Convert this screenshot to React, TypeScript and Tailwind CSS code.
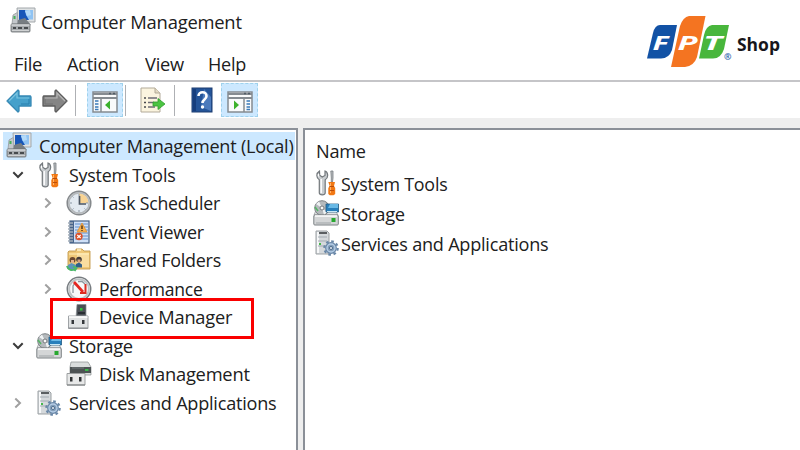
import React from "react";

type IconProps = { className?: string };

function ComputerIcon({ className = "" }: IconProps) {
  return (
    <svg viewBox="0 0 26 26" className={`h-[26px] w-[26px] shrink-0 ${className}`}>
      <path d="M3 8 L8 5 L8 17 L2 17 Z" fill="#c3c7cb" stroke="#8b9094" strokeWidth=".7" />
      <rect x="3.500" y="9" width="2" height="3" fill="#46b05c" />
      <path d="M7 1 H25 V15 L8 15 Z" fill="#dfe2e4" stroke="#a2a7aa" />
      <path d="M9 3 H23 V12.500 H9 Z" fill="#8fc3f3" />
      <path d="M9 3 H15 L16 8 L19 13 H9 Z" fill="#1756b8" />
      <path d="M15 4 L20 3 L21 8 L17 9Z" fill="#b4daf8" />
      <path d="M8 13 L15 11 L21 18 L17 19 H7 Z" fill="#777d82" />
      <rect x="1" y="17" width="19" height="8" rx="1" fill="#a7abae" stroke="#696e71" strokeWidth=".8" />
      <path d="M1.500 18 H19.500" stroke="#eceeef" />
      <path d="M3 21 H6 M8 21 H12 M14 21 H18" stroke="#474b4e" strokeWidth="2" />
      <path d="M2 23.500 H19" stroke="#d0d2d3" />
    </svg>
  );
}

function ToolsIcon({ className = "" }: IconProps) {
  return (
    <svg viewBox="0 0 20 26" className={`h-[26px] w-[20px] shrink-0 ${className}`}>
      <path
        d="M3.500 1 C0 3 0 8 3.300 9.800 V23 C3.500 25.500 9 25.500 9.200 23 V9.800 C13 7.500 12 2 9 1 V5.500 L6.200 7 L3.700 5.200 Z"
        fill="#c9cdd0"
        stroke="#73787c"
        strokeWidth="1.200"
      />
      <path d="M5.200 9 V23 M2.500 4 V6.500" stroke="#fff" strokeWidth="1.400" />
      <path d="M14.800 1 H17 V8 L16.500 12 H15.300 V8Z" fill="#b8bcbf" stroke="#777c80" strokeWidth=".8" />
      <path d="M12.300 12 H19 L18 16 L19.200 18 V24 L17.500 25.300 H13.800 L12.300 24 V18 L13.700 16Z" fill="#f27813" />
      <path d="M14.500 13 V23" stroke="#ffb56b" />
      <path d="M13.500 16.500 H18 M14 20.500 H18" stroke="#b94d0b" />
    </svg>
  );
}

function ClockIcon() {
  return (
    <svg viewBox="0 0 26 26" className="h-[26px] w-[26px]">
      <circle cx="13" cy="13" r="11.700" fill="#eef1f4" stroke="#85898c" strokeWidth="1.700" />
      <circle cx="13" cy="13" r="10.200" fill="#e3eaf1" stroke="#b5b9bc" strokeWidth="1.700" />
      <path d="M13 13 V3.500 A9.500 9.500 0 0 1 22.500 13 Z" fill="#f8d393" />
      <path d="M13 4 V6 M22 13 H20 M13 22 V20 M4 13 H6 M6.500 6.500 L7.500 7.500 M19.500 19.500 L18.500 18.500 M6.500 19.500 L7.500 18.500" stroke="#8b98a5" />
      <path d="M13.500 6 V14 H20" fill="none" stroke="#4c5661" strokeWidth="1.700" />
    </svg>
  );
}

function EventIcon() {
  return (
    <svg viewBox="0 0 26 26" className="h-[26px] w-[26px]">
      <rect x="4" y="2" width="19" height="22" fill="#cfe0f7" stroke="#476286" strokeWidth="1.200" />
      <path d="M9 5 H22 M9 8 H22 M9 11 H22 M9 14 H22 M9 17 H22 M9 20 H22" stroke="#86aadb" strokeWidth="1.300" />
      <rect x="4" y="2" width="4" height="22" fill="#48658c" />
      <path d="M2 4 H7 M2 7 H7 M2 10 H7 M2 13 H7 M2 16 H7 M2 19 H7 M2 22 H7" stroke="#a2adb9" strokeWidth="1.300" />
      <path d="M16 4 L21 13 H11 Z" fill="#f6b14f" stroke="#df8d2d" strokeWidth=".7" />
      <path d="M16 6.500 V10 M16 11 V12" stroke="#583915" strokeWidth="1.500" />
      <circle cx="13" cy="17.500" r="3.700" fill="#db522b" />
      <path d="M11.300 16 L14.700 19 M14.700 16 L11.300 19" stroke="#fff" strokeWidth="1.100" />
    </svg>
  );
}

function FolderIcon() {
  return (
    <svg viewBox="0 0 26 26" className="h-[26px] w-[26px]">
      <path d="M2 5 L3 4 H10 V2 H16 L18 4 H24 V22 H2 Z" fill="#efc878" stroke="#c49a4d" strokeWidth=".9" />
      <path d="M11 3 H15" stroke="#fff2c8" strokeWidth="1.500" />
      <path d="M11 6 H23 V20 H11Z" fill="#f9dda0" />
      <path d="M3 7 H23" stroke="#fff0bb" />
      <circle cx="6.500" cy="13" r="3" fill="#6b4830" />
      <path d="M5 13 H8 V16 H5Z" fill="#e2b18c" />
      <path d="M2 22 V18 L5.500 16 L10 18 V22Z" fill="#5c93bb" />
      <circle cx="13" cy="12.500" r="2.800" fill="#443b36" />
      <path d="M11.500 12.500 H14.500 V15.500 H11.500Z" fill="#d6a27c" />
      <path d="M10 20.500 V17 L13 15.500 L16 17.500 V20.500Z" fill="#315f88" />
      <path d="M1 19 C2 23 6 24 9.500 22 M7 19.500 L10.500 21 L8.500 24" fill="none" stroke="#4bb76a" strokeWidth="2" />
    </svg>
  );
}

function PerformanceIcon() {
  return (
    <svg viewBox="0 0 26 26" className="h-[26px] w-[26px]">
      <circle cx="13" cy="13" r="11.700" fill="#fff" stroke="#777c80" strokeWidth="1.500" />
      <circle cx="13" cy="13" r="9.900" fill="#f8f9f9" stroke="#bfc3c5" strokeWidth="1.900" />
      <path d="M7 17 V10 L9 7 M12 5.500 H16 L19 8" fill="none" stroke="#8c969d" strokeWidth="1.300" />
      <path d="M8 6 L17 16" stroke="#e52720" strokeWidth="2.700" />
      <path d="M19.500 8 V17 H14" fill="none" stroke="#dc2b20" strokeWidth="2" />
    </svg>
  );
}

function DeviceIcon() {
  return (
    <svg viewBox="0 0 26 26" className="h-[26px] w-[26px]">
      <path d="M11 .500 H20 V14 H10Z" fill="#4b5056" stroke="#878c90" strokeWidth=".7" />
      <rect x="14" y="4" width="2.500" height="2.500" fill="#30c53d" />
      <path d="M12 9 H19" stroke="#292e33" strokeWidth="2" />
      <path d="M2.500 12 H22 V24.500 H2.500Z" fill="#e1e3e4" stroke="#9fa3a6" />
      <path d="M3 13 H21.500" stroke="#fff" strokeWidth="1.500" />
      <path d="M5.500 16 H8 V20 H5.500Z M16 16 H18.500 V20 H16Z" fill="#35383b" />
      <path d="M2.500 24 H22" stroke="#838689" />
    </svg>
  );
}

function StorageIcon({ className = "" }: IconProps) {
  return (
    <svg viewBox="0 0 26 26" className={`h-[26px] w-[26px] shrink-0 ${className}`}>
      <path d="M1 15 L3 10 H22 L25 15Z" fill="#e1e4e5" stroke="#92979a" strokeWidth=".7" />
      <circle cx="9" cy="8" r="7.300" fill="#b5babd" stroke="#7e8386" />
      <path d="M9 8 L3 4 L6 1.500Z M9 8 L14 12 L11 15Z" fill="#eff2f3" />
      <path d="M2 7 L5 11" stroke="#55b465" strokeWidth="1.500" />
      <circle cx="9" cy="8" r="2" fill="#f8f8f8" stroke="#74797d" />
      <path d="M13 4 H25.500 V12 H13Z" fill="#287fbb" stroke="#225b83" strokeWidth=".8" />
      <path d="M17 4 H25 V8 H15Z" fill="#69b9e6" />
      <path d="M14 11.500 H24" stroke="#c9e8f5" />
      <rect x=".8" y="15" width="24.500" height="10" rx="1" fill="#d4d6d7" stroke="#7d8285" />
      <path d="M2 16 H24" stroke="#fff" strokeWidth="1.500" />
      <path d="M3 23 H18" stroke="#9fa4a7" />
      <rect x="18.500" y="18" width="4" height="4" fill="#28a830" />
    </svg>
  );
}

function DiskIcon() {
  return (
    <svg viewBox="0 0 26 26" className="h-[26px] w-[26px]">
      <path d="M5 1 H22 L25 6 V14 H4 V6Z" fill="#dadddd" stroke="#888c8e" strokeWidth=".7" />
      <rect x="4" y="6" width="21" height="6" fill="#4d5354" />
      <path d="M6 7 H18" stroke="#747b7c" />
      <rect x="19" y="8" width="3.500" height="2" fill="#3bb84b" />
      <path d="M1 12.500 H19 V24 H1Z" fill="#e7e8e8" stroke="#9c9fa0" />
      <path d="M4 16 H6.500 V20.500 H4Z M13 16 H15.500 V20.500 H13Z" fill="#303334" />
      <path d="M1 24 H19" stroke="#777b7c" />
    </svg>
  );
}

function ServicesIcon({ className = "" }: IconProps) {
  return (
    <svg viewBox="0 0 24 26" className={`h-[26px] w-[24px] shrink-0 ${className}`}>
      <path d="M1 1 H12 L14 3 V24 H1Z" fill="#d5d9dc" stroke="#9ca1a4" />
      <path d="M2 2 H4 V23 H2Z" fill="#f7f8f9" />
      <path d="M4 3 H12" stroke="#303438" strokeWidth="1.500" />
      <path d="M3 7 H12 M3 11 H12 M3 16 H12" stroke="#a3abb1" strokeWidth="1.200" />
      <rect x="4" y="13" width="2" height="2" fill="#46b74b" />
      <g transform="translate(16 18)">
        <circle r="6.700" fill="none" stroke="#6987a7" strokeWidth="2.200" strokeDasharray="2.600 2.660" />
        <circle r="5.300" fill="#b6cee7" stroke="#6987a7" strokeWidth="1.200" />
        <circle r="3.300" fill="#839eb9" />
        <circle r="1.500" fill="#f2f6fa" stroke="#34577b" strokeWidth=".8" />
      </g>
    </svg>
  );
}

function ArrowIcon({ forward = false }: { forward?: boolean }) {
  return (
    <svg viewBox="0 0 26 24" className={`mt-[2px] h-6 w-[26px] ${forward ? "-scale-x-100" : ""}`}>
      <path
        d="M1 12 L12 1 L13 2 V7 H24.500 L25 8 V17 H13 V22 L12 23 Z"
        fill={forward ? "#858585" : "#45a0cb"}
        stroke={forward ? "#5c5c5c" : "#3688b4"}
        strokeWidth="1.300"
        strokeLinejoin="round"
      />
      <path d="M3 12 L11 4 V9 H23" fill="none" stroke={forward ? "#b6b6b6" : "#7bc3df"} strokeWidth="1.200" />
      <path d="M15 15 H23 V10" fill="none" stroke={forward ? "#707070" : "#287ead"} />
    </svg>
  );
}

function PanelIcon({ right = false }: { right?: boolean }) {
  return (
    <svg viewBox="0 0 26 22" className="h-[22px] w-[26px]">
      <rect x="1" y="1" width="24" height="20" fill="#f9fafb" stroke="#858b91" strokeWidth="1.500" />
      <path d="M1 3 H25 M1 7 H25" stroke="#858b91" strokeWidth="2" />
      <path d="M17 2.500 H19 M21 2.500 H23" stroke="#505b66" strokeWidth="1.500" />
      {right ? (
        <>
          <path d="M17 7 V21" stroke="#858b91" strokeWidth="1.500" />
          <path d="M19.500 10 H23 M19.500 13 H23 M19.500 16 H23 M19.500 18.500 H23" stroke="#397ab9" strokeWidth="1.500" />
          <path d="M7 9.500 V18.500 L12 14Z" fill="#3bb12b" />
        </>
      ) : (
        <>
          <path d="M9 7 V21" stroke="#858b91" strokeWidth="1.500" />
          <path d="M3 10 H6.500 M3 13 H6.500 M3 16 H6.500 M3 18.500 H6.500" stroke="#397ab9" strokeWidth="1.500" />
          <path d="M18 9.500 V18.500 L13 14Z" fill="#3bb12b" />
        </>
      )}
    </svg>
  );
}

function ExportIcon() {
  return (
    <svg viewBox="0 0 26 26" className="h-[26px] w-[26px]">
      <path d="M1 1 H15 L20 6 V25 H1Z" fill="#fbf4df" stroke="#b2aa99" />
      <path d="M15 1 V6 H20" fill="#e3dac2" stroke="#b2aa99" />
      <path d="M4 11 H6 M4 15.500 H6 M4 20 H6" stroke="#48484c" strokeWidth="1.500" />
      <path d="M8 11 H17 M8 15.500 H14 M8 20 H15" stroke="#6d6b75" strokeWidth="1.400" />
      <path d="M13 15 H18 V11.500 L25 17 L18 22.500 V19 H13Z" fill="#4bc442" stroke="#319d31" strokeWidth=".8" />
    </svg>
  );
}

function HelpIcon() {
  return (
    <svg viewBox="0 0 22 26" className="h-[26px] w-[22px]">
      <rect x="1" y="1" width="20" height="24" fill="#245498" stroke="#1c3d70" />
      <path d="M2 2 H5 V24 H2Z" fill="#163e7d" />
      <path d="M13 2 L20 10 V24 L10 20Z" fill="#4c7abb" />
      <path
        d="M7.500 9 C7.500 4 15.500 4 15.500 9 C15.500 13 11.500 12 11.500 16"
        fill="none"
        stroke="#fff"
        strokeWidth="2.600"
      />
      <circle cx="11.500" cy="20" r="1.700" fill="#fff" />
    </svg>
  );
}

function Chevron({ down = false }: { down?: boolean }) {
  return down ? (
    <svg viewBox="0 0 12 8" className="mx-[-2px] h-2 w-3 shrink-0">
      <path d="M1.300 1.300 L6 6 L10.700 1.300" fill="none" stroke="#3b3b3b" strokeWidth="2" />
    </svg>
  ) : (
    <svg viewBox="0 0 8 12" className="h-3 w-2 shrink-0">
      <path d="M1.300 1.500 L6 6 L1.300 10.500" fill="none" stroke="#a0a0a0" strokeWidth="2" />
    </svg>
  );
}

type LabelProps = { scale: string; className?: string; children: React.ReactNode };

// Slightly condensed label, anchored at its left edge.
function Label({ scale, className = "", children }: LabelProps) {
  return <span className={`inline-block origin-left tracking-[-0.24px] ${scale} ${className}`}>{children}</span>;
}

type TreeItem = {
  label: string;
  icon: React.ReactNode;
  nested?: boolean;
  arrow?: "down" | "right";
  scale: string;
};

const tree: TreeItem[] = [
  { label: "System Tools", icon: <ToolsIcon />, arrow: "down", scale: "scale-x-[0.94]" },
  { label: "Task Scheduler", icon: <ClockIcon />, nested: true, arrow: "right", scale: "scale-x-[0.93]" },
  { label: "Event Viewer", icon: <EventIcon />, nested: true, arrow: "right", scale: "scale-x-[0.943]" },
  { label: "Shared Folders", icon: <FolderIcon />, nested: true, arrow: "right", scale: "scale-x-[0.943]" },
  { label: "Performance", icon: <PerformanceIcon />, nested: true, arrow: "right", scale: "scale-x-[0.922]" },
  { label: "Device Manager", icon: <DeviceIcon />, nested: true, scale: "scale-x-[0.96]" },
  { label: "Storage", icon: <StorageIcon />, arrow: "down", scale: "scale-x-[0.965]" },
  { label: "Disk Management", icon: <DiskIcon />, nested: true, scale: "scale-x-[0.963]" },
  { label: "Services and Applications", icon: <ServicesIcon />, arrow: "right", scale: "scale-x-[0.952]" },
];

function TreeRow({ item }: { item: TreeItem }) {
  return (
    <div className={`flex h-[28.5px] items-center ${item.nested ? "pl-[44px]" : "pl-[14px]"}`}>
      <div className="flex w-[22px] shrink-0 items-center">{item.arrow && <Chevron down={item.arrow === "down"} />}</div>
      <div className="flex w-[26px] shrink-0 justify-center">{item.icon}</div>
      <Label scale={item.scale} className="ml-[7px]">{item.label}</Label>
    </div>
  );
}

function FptLogo() {
  return (
    <svg viewBox="0 0 86 54" className="h-[54px] w-[86px] shrink-0 font-['Open_Sans',sans-serif] font-bold italic">
      <path d="M13 10 H30 L25 35 Q22 43.500 14 43.500 H0 L6 18 Q8 10 13 10Z" fill="#1252a5" />
      <path d="M42 1 H58.500 L50 42 Q47 51 38 52 H24 L33 11 Q36 2 42 1Z" fill="#f47421" />
      <path d="M65 10 H82 L77 34 Q74 43.500 66 43.500 H52 L57 20 Q59 11 65 10Z" fill="#48b63c" />
      <text x="5.500" y="34.500" fontSize="20" fill="#fff" textLength="16" lengthAdjust="spacingAndGlyphs">F</text>
      <text x="30.500" y="34.500" fontSize="20" fill="#fff" textLength="20" lengthAdjust="spacingAndGlyphs">P</text>
      <text x="56" y="34.500" fontSize="20" fill="#fff" textLength="19" lengthAdjust="spacingAndGlyphs">T</text>
      <text x="77" y="44.500" fontSize="9" fill="#1f62ab" fontStyle="normal">®</text>
    </svg>
  );
}

export default function App() {
  return (
    <div className="flex h-[450px] w-[800px] flex-col overflow-hidden bg-white font-['Open_Sans','Noto_Sans',sans-serif] text-[19px] leading-7 whitespace-nowrap text-[#202020]">
      <div className="flex h-20 shrink-0 justify-between">
        <div>
          <header className="flex h-[43px] items-center pl-[10px]">
            <ComputerIcon className="mt-[-3px]" />
            <h1 className="ml-[5px]"><Label scale="scale-x-[0.968]">Computer Management</Label></h1>
          </header>
          <nav className="flex h-[37px] items-center pt-1 pl-[14px]">
            <span className="w-[53px]"><Label scale="scale-x-[0.97]">File</Label></span>
            <span className="w-[78px]"><Label scale="scale-x-[0.96]">Action</Label></span>
            <span className="w-[63px]"><Label scale="scale-x-[0.96]">View</Label></span>
            <Label scale="scale-x-[0.95]">Help</Label>
          </nav>
        </div>
        <div className="flex w-[153px] pt-[15px]">
          <FptLogo />
          <span className="mt-[15px] ml-1 inline-block origin-left scale-x-[0.97] text-[18px] leading-7 font-bold text-[#17171b]">Shop</span>
        </div>
      </div>
      <div className="flex h-[38px] shrink-0 items-center border-t-2 border-[#c5c5c8] pl-[6px]">
        <ArrowIcon />
        <div className="ml-[10px]"><ArrowIcon forward /></div>
        <div className="ml-[7px] h-[31px] w-px bg-[#aeb0b4]" />
        <div className="ml-[11px] flex h-[34px] w-9 items-center justify-center border border-dashed border-[#9fd2ed] bg-[#cce8ff] pt-1"><PanelIcon /></div>
        <div className="ml-[2px] h-[31px] w-px bg-[#aeb0b4]" />
        <div className="ml-[14px]"><ExportIcon /></div>
        <div className="ml-[8px] h-[31px] w-px bg-[#aeb0b4]" />
        <div className="ml-4"><HelpIcon /></div>
        <div className="ml-2 flex h-[34px] w-[37px] items-center justify-center border border-dashed border-[#9fd2ed] bg-[#cce8ff] pt-1"><PanelIcon right /></div>
      </div>
      <main className="flex min-h-0 grow bg-[#eeeeee] pt-[10px]">
        <section className="relative w-[298px] shrink-0 border-t-2 border-r-2 border-[#8b9098] bg-white pt-[2px]">
          <div className="mb-[0.5px] ml-[3px] flex h-[28px] w-[292px] items-center bg-[#cce8ff] pl-[3px]">
            <ComputerIcon className="mt-[-2px]" />
            <Label scale="scale-x-[0.952]" className="ml-[7px]">Computer Management (Local)</Label>
          </div>
          {tree.map((item) => <TreeRow key={item.label} item={item} />)}
          <div className="absolute top-[168px] left-[50px] h-[41px] w-[204px] border-3 border-[#fa0000]" />
        </section>
        <section className="ml-[5px] grow border-t-2 border-l-2 border-[#8b9098] bg-white">
          <div className="flex h-[39px] items-center pt-[2px] pl-[11px]"><Label scale="scale-x-[0.955]">Name</Label></div>
          <div className="flex h-[30px] items-center pl-[8px]">
            <div className="flex w-[26px] justify-center"><ToolsIcon className="mt-[-2px]" /></div>
            <Label scale="scale-x-[0.94]" className="ml-[2px]">System Tools</Label>
          </div>
          <div className="flex h-[30px] items-center pl-[8px]">
            <StorageIcon className="mt-[-2px]" />
            <Label scale="scale-x-[0.965]" className="ml-[2px]">Storage</Label>
          </div>
          <div className="flex h-[30px] items-center pl-[10px]">
            <ServicesIcon className="mt-[-2px]" />
            <Label scale="scale-x-[0.952]" className="ml-[2px]">Services and Applications</Label>
          </div>
        </section>
      </main>
    </div>
  );
}
